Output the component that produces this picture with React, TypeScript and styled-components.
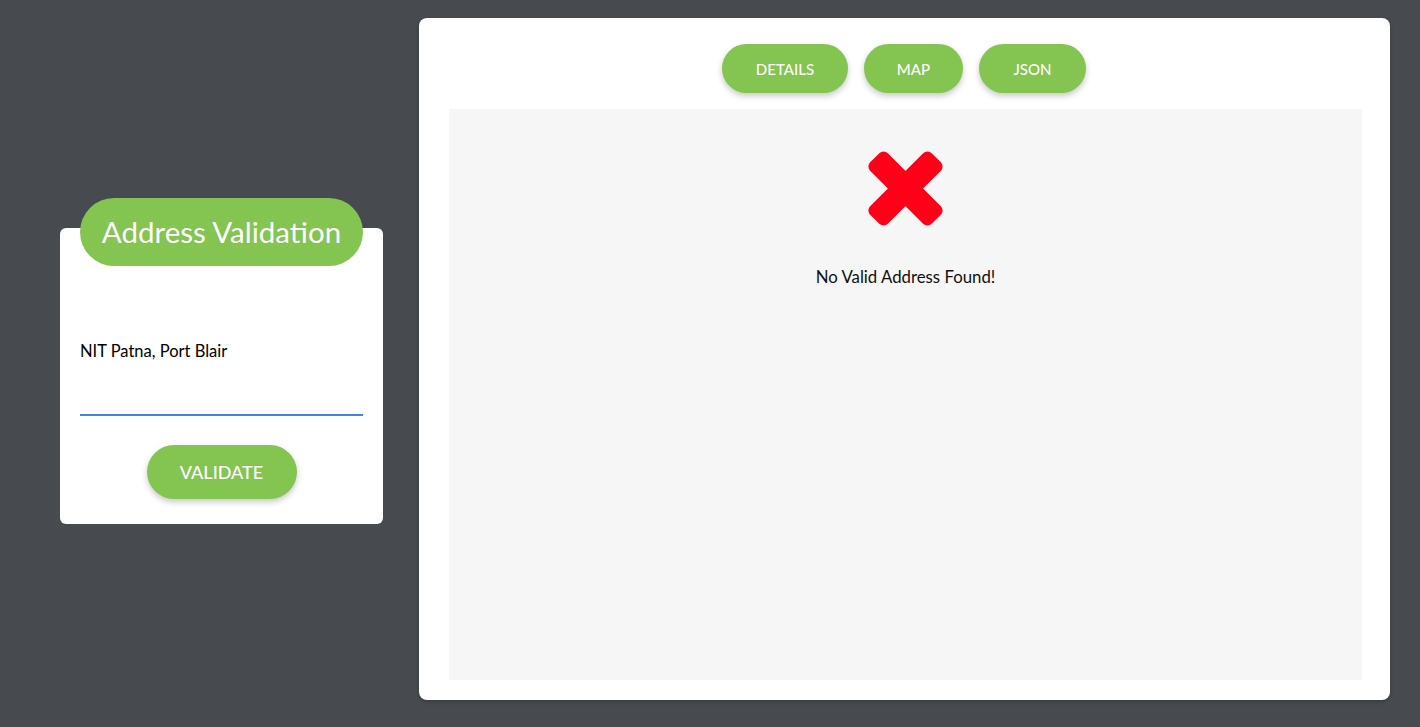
import React from "react";
import styled, { createGlobalStyle } from "styled-components";

const GlobalStyle = createGlobalStyle`
  html, body {
    margin: 0;
    padding: 0;
    background: #474b4f;
    font-family: "Lato", "Noto Sans", sans-serif;
  }
  * { box-sizing: border-box; }
`;

const GREEN = "#84c451";

const Page = styled.div`
  display: flex;
  align-items: center;
  gap: 36px;
  height: 727px;
  padding: 18px 30px 27px 60px;
`;

const Card = styled.div`
  width: 323px;
  background: #fff;
  border-radius: 6px;
  display: flex;
  flex-direction: column;
  align-items: stretch;
  padding: 0 20px 25px;
  margin-top: 33px;
`;

const TitlePill = styled.h1`
  margin: -30px 0 0;
  height: 68px;
  border-radius: 34px;
  background: ${GREEN};
  color: #fff;
  font-weight: 400;
  font-size: 29.5px;
  display: flex;
  align-items: center;
  justify-content: center;
`;

const AddressInput = styled.input`
  margin-top: 60px;
  height: 90px;
  border: none;
  border-bottom: 2px solid #3e84e6;
  padding: 0 0 38px;
  font-family: inherit;
  font-size: 16.5px;
  color: #000;
  background: transparent;
  outline: none;
`;

const PillButton = styled.button<{ $w: number; $h: number; $size: number }>`
  width: ${(p) => p.$w}px;
  height: ${(p) => p.$h}px;
  border: none;
  border-radius: ${(p) => p.$h / 2}px;
  background: ${GREEN};
  color: #fff;
  font-family: inherit;
  font-size: ${(p) => p.$size}px;
  font-weight: 500;
  box-shadow: 0 3px 6px rgba(0, 0, 0, 0.22);
  cursor: pointer;
  display: flex;
  align-items: center;
  justify-content: center;
  padding: 0;
`;

const ValidateRow = styled.div`
  margin-top: 29px;
  display: flex;
  justify-content: center;
`;

const Panel = styled.div`
  flex: 1;
  height: 682px;
  background: #fff;
  border-radius: 8px;
  display: flex;
  flex-direction: column;
  padding: 26px 28px 20px 30px;
  box-shadow: 0 2px 4px rgba(0, 0, 0, 0.2);
`;

const Tabs = styled.div`
  display: flex;
  justify-content: center;
  gap: 16px;
  margin-right: 3px;
`;

const Content = styled.div`
  margin-top: 16px;
  flex: 1;
  background: #f6f6f6;
  display: flex;
  flex-direction: column;
  align-items: center;
  padding-top: 40px;
`;

const Message = styled.p`
  margin: 38px 0 0;
  font-size: 16.8px;
  color: #111;
`;

const CrossIcon = () => (
  <svg width="79" height="79" viewBox="0 0 79 79">
    <rect x="-4" y="27" width="87" height="25" rx="6" fill="#ff0019" transform="rotate(45 39.5 39.5)" />
    <rect x="-4" y="27" width="87" height="25" rx="6" fill="#ff0019" transform="rotate(-45 39.5 39.5)" />
  </svg>
);

export default function App() {
  return (
    <>
      <GlobalStyle />
      <Page>
        <Card>
          <TitlePill>Address Validation</TitlePill>
          <AddressInput defaultValue="NIT Patna, Port Blair" />
          <ValidateRow>
            <PillButton $w={150} $h={54} $size={18}>VALIDATE</PillButton>
          </ValidateRow>
        </Card>
        <Panel>
          <Tabs>
            <PillButton $w={126} $h={49} $size={15}>DETAILS</PillButton>
            <PillButton $w={99} $h={49} $size={15}>MAP</PillButton>
            <PillButton $w={107} $h={49} $size={15}>JSON</PillButton>
          </Tabs>
          <Content>
            <CrossIcon />
            <Message>No Valid Address Found!</Message>
          </Content>
        </Panel>
      </Page>
    </>
  );
}
